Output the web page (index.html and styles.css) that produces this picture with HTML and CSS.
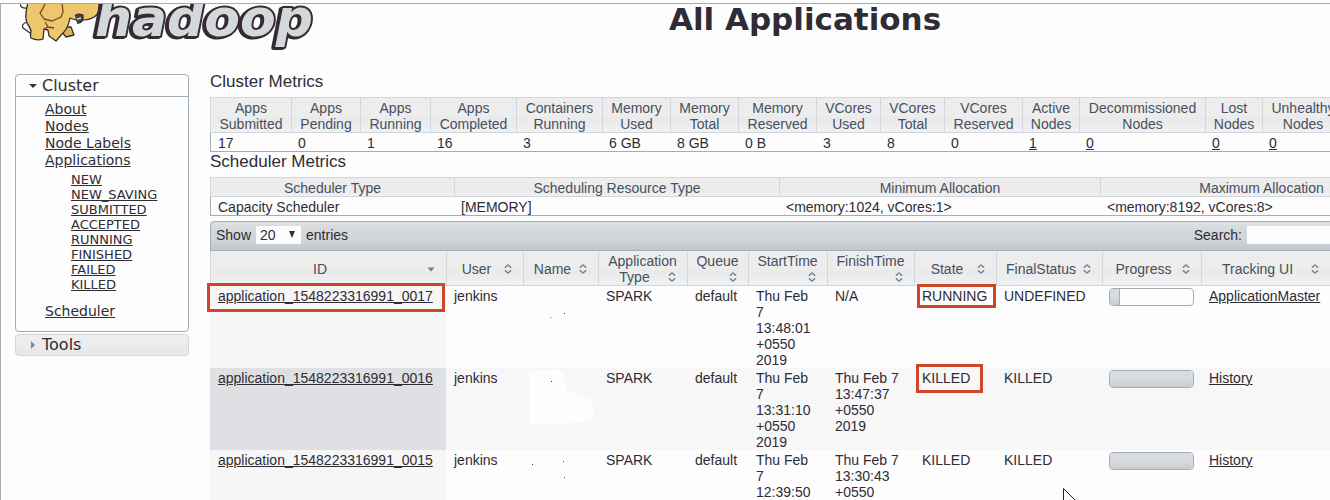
FILE: index.html
```html
<!DOCTYPE html>
<html lang="en">
<head>
<meta charset="utf-8">
<title>All Applications</title>
<link rel="stylesheet" href="styles.css">
</head>
<body>
<svg class="defs" aria-hidden="true">
  <symbol id="sort" viewBox="0 0 16 16"><path d="M5.500 7V6L8 4l2.500 2v1M5.500 9v1L8 12l2.500-2V9" fill="none" stroke="#71869c" stroke-width="1.500"/></symbol>
  <symbol id="desc" viewBox="0 0 16 16"><path d="M4.500 6.500h7L8 10.500z" fill="#5b7fa3"/></symbol>
</svg>
<div class="frame">
  <header class="banner">
    <svg class="logo" viewBox="20 4 300 46" role="img" aria-label="Hadoop">
      <g stroke="#352c2f" stroke-width="1.300" stroke-linejoin="round">
        <path d="M27 22q-6 2-4 6l7 5M20 4q1 5 7 4" fill="none"/>
        <path d="M65 27l6 0 3 8-8 2-4-5z" fill="#dcb55c"/>
        <path d="M28 2C27 8 24 15 27 23q3 4 4 8-1 5 0 7 6 3 12 1l1-10 4 1 1 6 7 5 6-7q6-5 8-16l6 2q12 1 18-3 5-3 5-9V2z" fill="#ecc76b"/>
        <path d="M46 2q-3 7-6 11l4 6 8 2 9-4 2-5-1-10M45 22l3 5 6 1M44 29l4-2" fill="none" stroke="#7c4226"/>
        <path d="M75 16q2-3 8-1l0 5q-3 4-6 3" fill="#454347"/>
        <path d="M77 19l4-1" stroke="#ddd"/>
      </g>
      <text x="95" y="36" class="word">hadoop</text>
    </svg>
    <h1 class="title">All Applications</h1>
  </header>

  <div class="layout">
    <nav class="sidebar">
      <section class="panel">
        <h2 class="panel-head"><svg class="tri" viewBox="0 0 8 8"><path d="M0 2h8L4 6z" fill="#333"/></svg>Cluster</h2>
        <ul class="links">
          <li><a href="#">About</a></li>
          <li><a href="#">Nodes</a></li>
          <li><a href="#">Node Labels</a></li>
          <li><a href="#">Applications</a>
            <ul class="states">
              <li><a href="#">NEW</a></li>
              <li><a href="#">NEW_SAVING</a></li>
              <li><a href="#">SUBMITTED</a></li>
              <li><a href="#">ACCEPTED</a></li>
              <li><a href="#">RUNNING</a></li>
              <li><a href="#">FINISHED</a></li>
              <li><a href="#">FAILED</a></li>
              <li><a href="#">KILLED</a></li>
            </ul>
          </li>
          <li><a href="#">Scheduler</a></li>
        </ul>
      </section>
      <h2 class="panel-head panel-closed"><svg class="tri" viewBox="0 0 8 8"><path d="M2 0v8L6 4z" fill="#6f8ba5"/></svg>Tools</h2>
    </nav>

    <main class="main">
      <h2 class="heading">Cluster Metrics</h2>
      <table class="metrics">
        <colgroup><col class="w81"><col class="w69"><col class="w70"><col class="w86"><col class="w86"><col class="w68"><col class="w68"><col class="w78"><col class="w64"><col class="w64"><col class="w78"><col class="w57"><col class="w126"><col class="w57"><col class="w81"><col></colgroup>
        <thead><tr>
          <th>Apps<br>Submitted</th><th>Apps<br>Pending</th><th>Apps<br>Running</th><th>Apps<br>Completed</th><th>Containers<br>Running</th><th>Memory<br>Used</th><th>Memory<br>Total</th><th>Memory<br>Reserved</th><th>VCores<br>Used</th><th>VCores<br>Total</th><th>VCores<br>Reserved</th><th>Active<br>Nodes</th><th>Decommissioned<br>Nodes</th><th>Lost<br>Nodes</th><th>Unhealthy<br>Nodes</th><th></th>
        </tr></thead>
        <tbody><tr>
          <td>17</td><td>0</td><td>1</td><td>16</td><td>3</td><td>6 GB</td><td>8 GB</td><td>0 B</td><td>3</td><td>8</td><td>0</td><td><a href="#">1</a></td><td><a href="#">0</a></td><td><a href="#">0</a></td><td><a href="#">0</a></td><td></td>
        </tr></tbody>
      </table>

      <h2 class="heading">Scheduler Metrics</h2>
      <table class="metrics">
        <colgroup><col class="w244"><col class="w325"><col class="w321"><col></colgroup>
        <thead><tr><th>Scheduler Type</th><th>Scheduling Resource Type</th><th>Minimum Allocation</th><th>Maximum Allocation</th></tr></thead>
        <tbody><tr><td>Capacity Scheduler</td><td>[MEMORY]</td><td>&lt;memory:1024, vCores:1&gt;</td><td>&lt;memory:8192, vCores:8&gt;</td></tr></tbody>
      </table>

      <div class="toolbar">
        <label class="field">Show
          <span class="pick"><select><option>20</option><option>50</option><option>100</option></select><svg class="pick-arrow" viewBox="0 0 6 7"><path d="M0 0h6L3 7z" fill="#333"/></svg></span>
          entries</label>
        <label class="field">Search: <input class="search" type="text"></label>
      </div>

      <table class="apps">
        <colgroup><col class="w236"><col class="w77"><col class="w75"><col class="w89"><col class="w61"><col class="w79"><col class="w87"><col class="w82"><col class="w106"><col class="w99"><col></colgroup>
        <thead><tr>
          <th><svg class="sort"><use href="#desc"/></svg>ID</th>
          <th><svg class="sort"><use href="#sort"/></svg>User</th>
          <th><svg class="sort"><use href="#sort"/></svg>Name</th>
          <th>Application<br><svg class="sort"><use href="#sort"/></svg>Type</th>
          <th>Queue<br><svg class="sort"><use href="#sort"/></svg></th>
          <th>StartTime<br><svg class="sort"><use href="#sort"/></svg></th>
          <th>FinishTime<br><svg class="sort"><use href="#sort"/></svg></th>
          <th><svg class="sort"><use href="#sort"/></svg>State</th>
          <th><svg class="sort"><use href="#sort"/></svg>FinalStatus</th>
          <th><svg class="sort"><use href="#sort"/></svg>Progress</th>
          <th><svg class="sort"><use href="#sort"/></svg>Tracking UI</th>
        </tr></thead>
        <tbody>
          <tr>
            <td><a href="#">application_1548223316991_0017</a><span class="mark mark-id"></span></td>
            <td>jenkins</td>
            <td class="name"><svg class="specks" viewBox="0 0 75 80"><path d="M41 27h1v1h-1z" fill="#333"/><path d="M27 31h2v1h-2z" fill="#bbb"/></svg></td>
            <td>SPARK</td><td>default</td>
            <td>Thu Feb<br>7<br>13:48:01<br>+0550<br>2019</td><td>N/A</td>
            <td>RUNNING<span class="mark mark-running"></span></td><td>UNDEFINED</td>
            <td class="cell-bar"><div class="bar" role="progressbar" aria-label="Progress" aria-valuenow="10"><div class="fill" style="width:12%"></div></div></td>
            <td><a href="#">ApplicationMaster</a></td>
          </tr>
          <tr>
            <td><a href="#">application_1548223316991_0016</a></td>
            <td>jenkins</td>
            <td class="name"><svg class="specks" viewBox="0 0 75 80"><path d="M6 4q10-2 20-2 10-2 14 2 2 8 4 19 8 2 13 5 8 2 12 6 3 10 0 18-8 3-20 3-20 1-43 0z" fill="#fdfdfe"/><path d="M28 13h1v1h-1z" fill="#333"/></svg></td>
            <td>SPARK</td><td>default</td>
            <td>Thu Feb<br>7<br>13:31:10<br>+0550<br>2019</td><td>Thu Feb 7<br>13:47:37<br>+0550<br>2019</td>
            <td>KILLED<span class="mark mark-killed"></span></td><td>KILLED</td>
            <td class="cell-bar"><div class="bar" role="progressbar" aria-label="Progress" aria-valuenow="100"><div class="fill" style="width:100%"></div></div></td>
            <td><a href="#">History</a></td>
          </tr>
          <tr>
            <td><a href="#">application_1548223316991_0015</a></td>
            <td>jenkins</td>
            <td class="name"><svg class="specks" viewBox="0 0 75 80"><path d="M9 14h1v1h-1zM41 27h1v1h-1zM40 11h1v1h-1z" fill="#444"/></svg></td>
            <td>SPARK</td><td>default</td>
            <td>Thu Feb<br>7<br>12:39:50<br>+0550<br>2019</td><td>Thu Feb 7<br>13:30:43<br>+0550<br>2019</td>
            <td>KILLED</td><td>KILLED<svg class="cursor" viewBox="0 0 14 20"><path d="M.5.500v17l4-4 3 6 2-1-3-6h6z" fill="#fff" stroke="#222"/></svg></td>
            <td class="cell-bar"><div class="bar" role="progressbar" aria-label="Progress" aria-valuenow="100"><div class="fill" style="width:100%"></div></div></td>
            <td><a href="#">History</a></td>
          </tr>
        </tbody>
      </table>
    </main>
  </div>
</div>
</body>
</html>
```
FILE: styles.css
```css
* { box-sizing: border-box; }
body {
  margin: 0;
  padding-top: 3px;
  height: 100vh;
  overflow: hidden;
  background: #fdfdfe;
  color: #2f2c33;
  font: 14px/16px "Liberation Sans", Arial, sans-serif;
}
a { color: inherit; }
h1, h2, ul { margin: 0; padding: 0; font-weight: normal; list-style: none; }
.defs { display: none; }
.frame {
  height: 100%;
  overflow: hidden;
  border-top: 1px solid #a7abb3;
  border-left: 1px solid #a7abb3;
}

/* Banner */
.banner { display: flex; height: 68px; }
.logo { flex: none; width: 300px; height: 46px; margin-left: 19px; margin-right: -110px; }
.word {
  font: italic bold 52px "DejaVu Sans", Verdana, sans-serif;
  fill: #d4d8dd;
  stroke: #352c2f;
  stroke-width: 4px;
  stroke-linejoin: round;
  paint-order: stroke;
  filter: drop-shadow(-2px 1px 0 #352c2f);
}
.title {
  flex: none;
  width: 1190px;
  font: bold 31px/30px "DejaVu Sans", Verdana, sans-serif;
  text-align: center;
}

/* Layout */
.layout { display: grid; grid-template-columns: 174px minmax(0, 1fr); gap: 21px; padding-left: 14px; }
.main { min-width: 0; }

/* Sidebar */
.sidebar { padding-top: 2px; font-family: "DejaVu Sans", Verdana, sans-serif; }
.panel { border: 1px solid #a3adb6; border-radius: 4px; padding-bottom: 11px; margin-bottom: 2px; }
.panel-head {
  display: flex;
  align-items: center;
  gap: 5px;
  height: 22px;
  padding-left: 13px;
  font-size: 16px;
  line-height: 20px;
  border-bottom: 1px solid #a3adb6;
}
.panel-closed { border: 1px solid #d3d6dc; border-radius: 4px; background: linear-gradient(#efefef, #e6e7e9); }
.tri { width: 8px; height: 8px; }
.links { padding: 4px 0 0 29px; font-size: 14px; line-height: 17px; }
.states { padding: 3px 0 11px 26px; font-size: 13px; line-height: 15px; }

/* Tables */
.heading { font-size: 17px; line-height: 18px; padding-top: 1px; margin-bottom: 6px; }
table { table-layout: fixed; border-collapse: separate; border-spacing: 0; }
th {
  font-weight: normal;
  color: #46505e;
  background: linear-gradient(#ededed 50%, #e9eaeb 60%, #f0f0f1);
  border-left: 1px solid #d3d6dc;
  border-bottom: 1px solid #d3d6dc;
}
td { text-align: left; vertical-align: top; }
.metrics { width: calc(100% + 92px); }
.metrics th { padding: 2px 0 0; border-top: 1px solid #d3d6dc; }
.metrics td { padding: 2px 7px 0; border-bottom: 1px solid #a3adb6; }
.metrics td:first-child { border-left: 1px solid #a3adb6; }
.w57 { width: 57px; } .w61 { width: 61px; } .w64 { width: 64px; } .w68 { width: 68px; }
.w69 { width: 69px; } .w70 { width: 70px; } .w75 { width: 75px; } .w77 { width: 77px; }
.w78 { width: 78px; } .w79 { width: 79px; } .w81 { width: 81px; } .w82 { width: 82px; }
.w86 { width: 86px; } .w87 { width: 87px; } .w89 { width: 89px; } .w99 { width: 99px; }
.w106 { width: 106px; } .w126 { width: 126px; } .w236 { width: 236px; }
.w244 { width: 244px; } .w321 { width: 321px; } .w325 { width: 325px; }

/* Toolbar */
.toolbar {
  display: flex;
  justify-content: space-between;
  align-items: center;
  width: calc(100% + 92px);
  height: 30px;
  margin-top: 5px;
  padding: 0 4px 2px 5px;
  border: 1px solid #a3adb6;
  border-radius: 4px 4px 0 0;
  background: linear-gradient(#dfe2e4, #d4d7dc 30%, #d2d5da 60%, #c3c8ce);
}
.field { display: flex; align-items: center; gap: 5px; }
.pick { position: relative; }
.pick select {
  display: block;
  appearance: none;
  width: 45px;
  height: 18px;
  padding: 0 4px;
  border: 0;
  background: #fdfdfe;
  color: inherit;
  font: inherit;
}
.pick-arrow { position: absolute; right: 6px; top: 5px; width: 6px; height: 7px; pointer-events: none; }
.search { width: 170px; height: 18px; padding: 0 4px; border: 0; background: #fdfdfe; font: inherit; }

/* Applications */
.apps { width: 100%; }
.apps th { height: 35px; padding: 1px 7px 0 6px; }
.sort { float: right; width: 16px; height: 16px; }
.apps td { position: relative; height: 82px; padding: 2px 0 0 8px; white-space: nowrap; }
.apps tr td:first-child { background: #f6f6f7; }
.apps tbody tr:nth-child(even) td { background: #f7f7f8; }
.apps tbody tr:nth-child(even) td:first-child { background: #dfe0e3; }
.specks { position: absolute; left: 0; top: 0; width: 75px; height: 80px; }
.apps .cell-bar { padding: 2px 7px 0; }
.bar { height: 18px; border: 1px solid #a3adb6; border-radius: 4px; overflow: hidden; }
.fill { height: 100%; border-right: 1px solid #a3adb6; background: linear-gradient(#d8dbdf 50%, #c8ccd1); }
.fill[style*="100%"] { border-right: 0; }
.mark { position: absolute; border: 3px solid #d04628; pointer-events: none; z-index: 1; }
.mark-id { left: -3px; top: -3px; width: 238px; height: 29px; }
.mark-running { left: 3px; top: -2px; width: 79px; height: 24px; }
.mark-killed { left: 2px; top: -4px; width: 67px; height: 29px; }
.cursor { position: absolute; left: 67px; top: 38px; width: 14px; height: 20px; }
```
